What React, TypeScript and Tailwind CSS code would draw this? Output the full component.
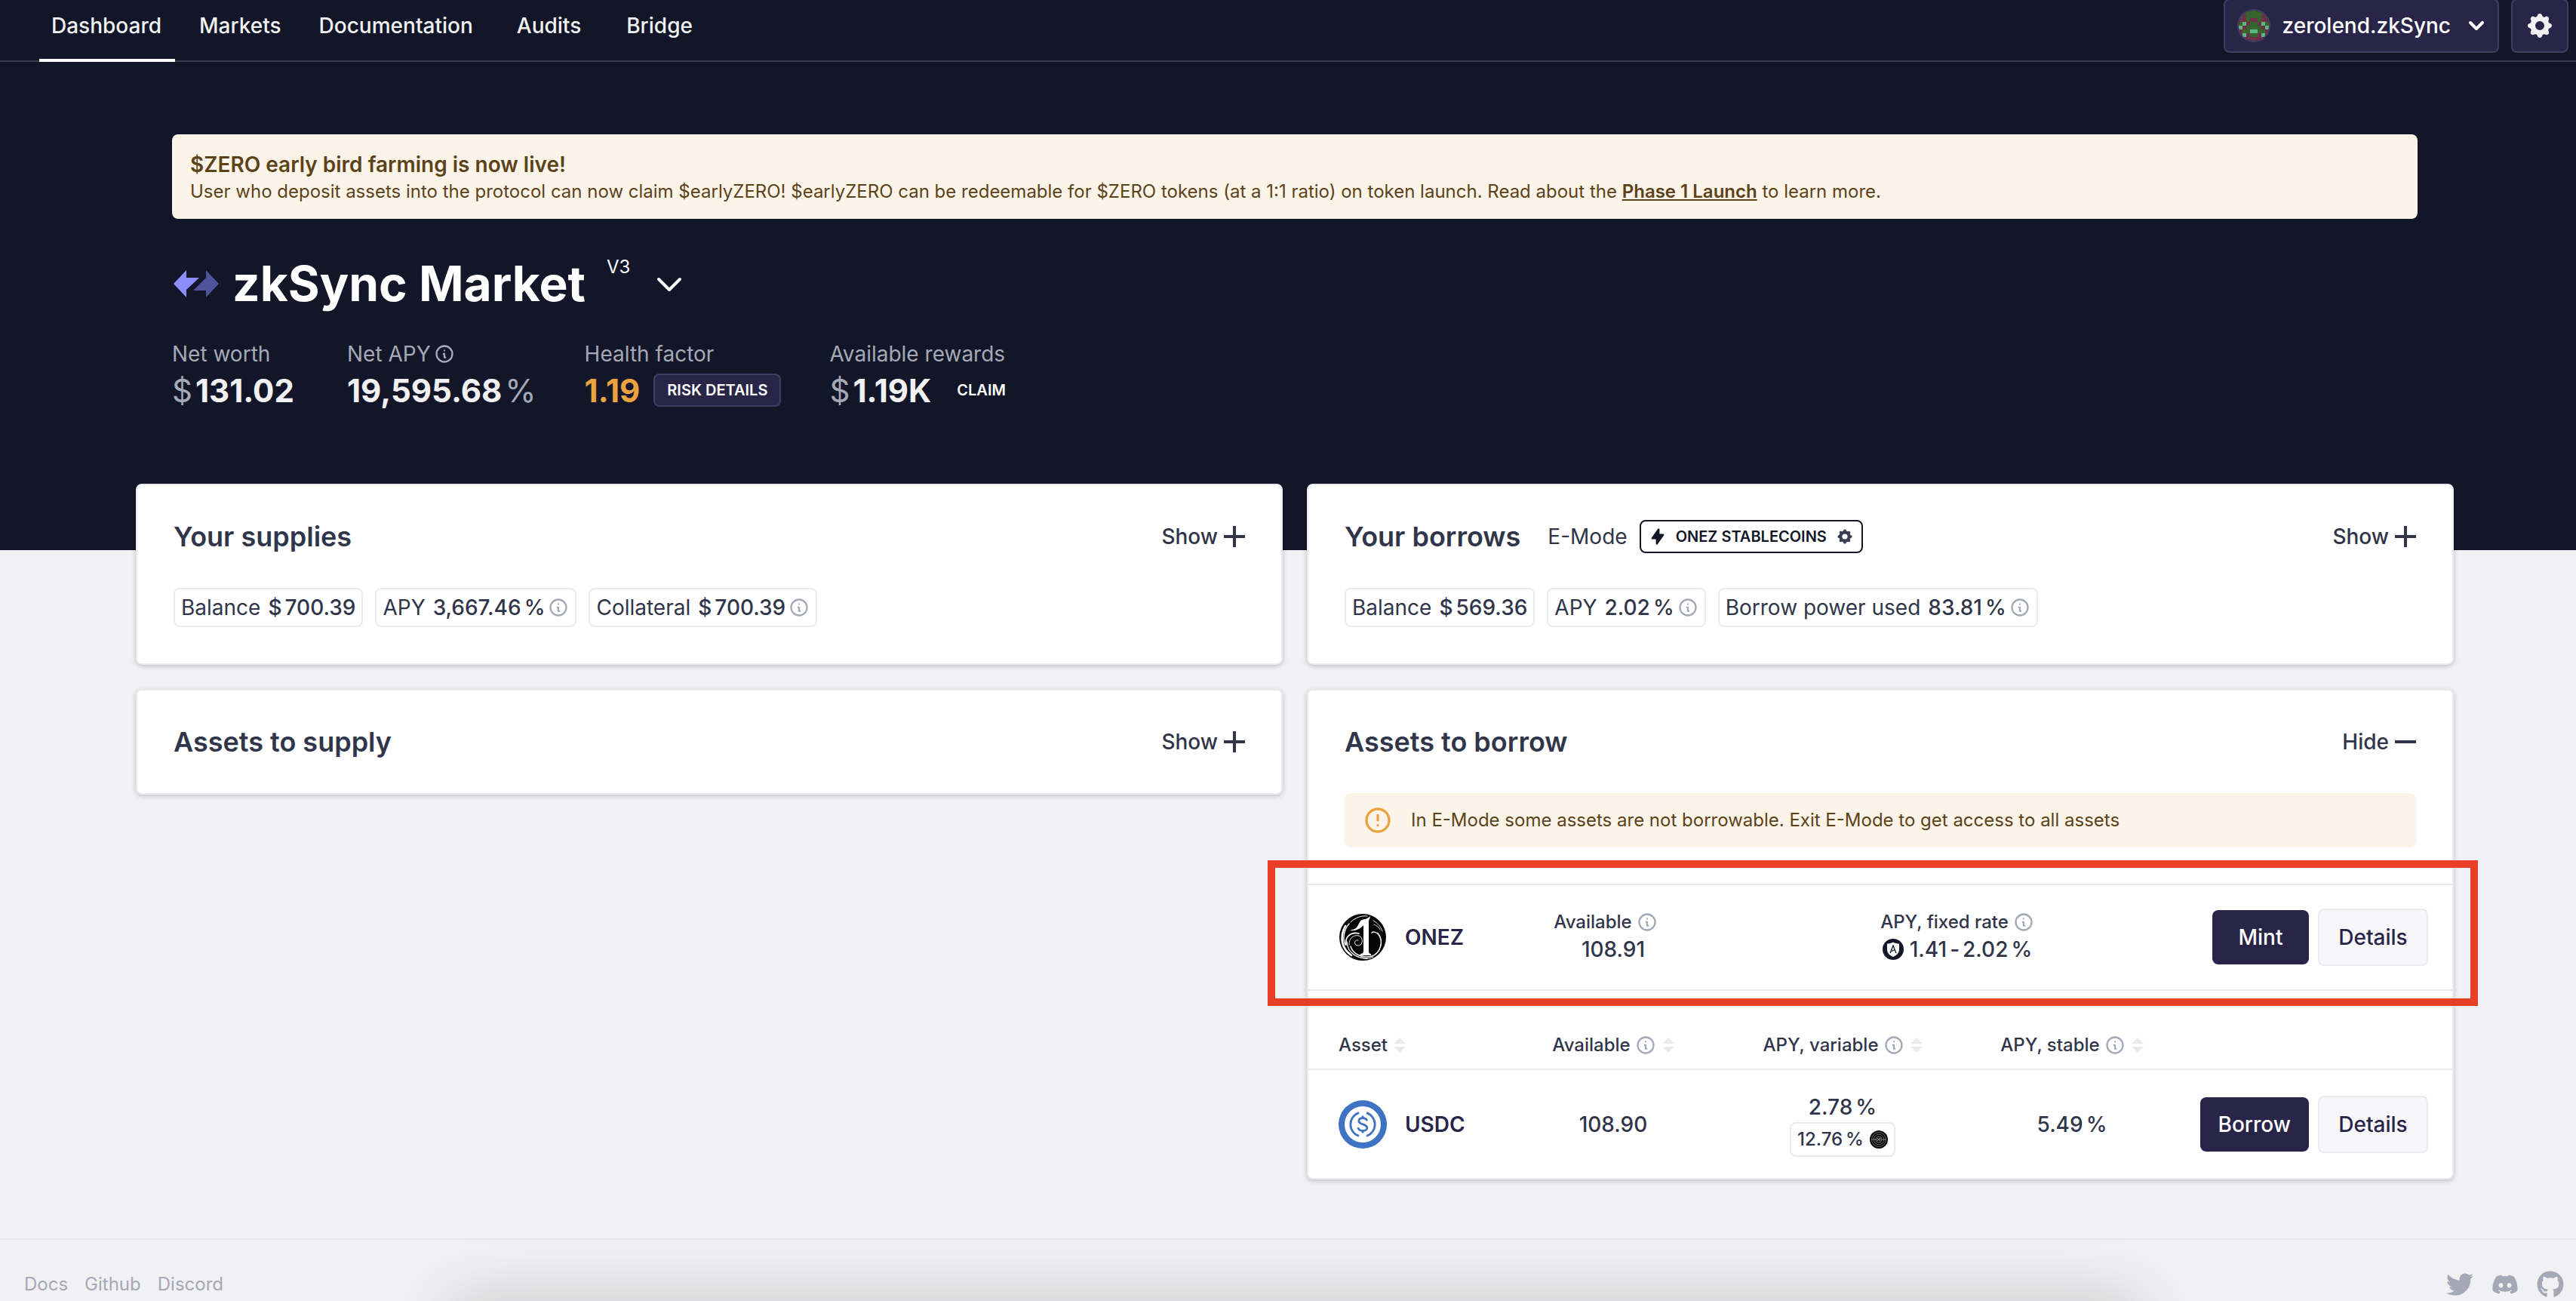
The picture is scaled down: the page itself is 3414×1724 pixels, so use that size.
import React from "react";
import {
  HiCog,
  HiChevronDown,
  HiLightningBolt,
  HiOutlineChevronDown,
  HiOutlineExclamationCircle,
  HiOutlineInformationCircle,
} from "react-icons/hi";
import { FaDiscord, FaGithub, FaTwitter } from "react-icons/fa";

/* ---------- icons ---------- */

const AVATAR_ROWS = [
  "gggggggg",
  "gmggggmg",
  "mmgmmgmm",
  "glmggmlg",
  "lmggggml",
  "mggllggm",
  "mlmggmlm",
  "mmmmmmmm",
];
const AVATAR_COLORS: Record<string, string> = { g: "#37642a", m: "#6d2f49", l: "#5cb77f" };

function Avatar() {
  return (
    <svg viewBox="0 0 8 8" className="size-11 rounded-full border-2 border-[#3f3d60]" shapeRendering="crispEdges" aria-hidden="true">
      {AVATAR_ROWS.map((row, y) =>
        row.split("").map((c, x) => (
          <rect key={`${x}-${y}`} x={x} y={y} width="1" height="1" fill={AVATAR_COLORS[c]} />
        )),
      )}
    </svg>
  );
}

function ZkSyncLogo() {
  return (
    <svg viewBox="0 0 60 36" className="h-9 w-[60px]" aria-hidden="true">
      <polygon points="60,18 43,36 43,27 26,27 43,10 43,0" fill="#4e529a" />
      <polygon points="0,18 17,0 17,10 34,10 17,26 17,36" fill="#8c8dfc" />
    </svg>
  );
}

function OnezLogo() {
  return (
    <svg viewBox="0 0 64 64" className="size-16 shrink-0" aria-hidden="true">
      <circle cx="32" cy="32" r="31" fill="#050505" />
      <g fill="none" stroke="#fff" strokeLinecap="round">
        <path d="M9 17C1 32 4 47 17 56" strokeWidth="2.6" />
        <path d="M14 14C7 22 5 34 9 42" strokeWidth="1.4" />
        <path d="M14 42C13 34 20 28 27 30C34 33 32 44 25 43C20 42 20 35 26 36" strokeWidth="0.9" />
        <path d="M10 42C8 32 16 24 27 27" strokeWidth="1.7" />
        <path d="M11 38C12 54 26 60 38 60" strokeWidth="1.3" />
        <path d="M16 44C19 55 32 60 44 57C56 53 59 38 54 30C51 25 46 24 44 26" strokeWidth="1.4" />
        <path d="M52 26C59 33 58 48 48 55" strokeWidth="0.8" />
        <path d="M20 55C28 60 38 62 46 58" strokeWidth="1" />
        <path d="M46 10C52 13 56 18 58 24" strokeWidth="0.8" />
        <path d="M47 15C51 17 54 19 55 22" strokeWidth="0.8" />
        <path d="M16 12C22 6 30 3 38 4" strokeWidth="1" />
      </g>
      <path
        d="M42 4C38 8 34 8 31 9C28 10 27 15 24 19C21 22 17 22 15 23C22 24 29 21 33 16V50C33 53 31 54 29 54V56H43V54C41 54 40 53 40 50V10C41 8 42 6 42 4Z"
        fill="#fff"
      />
    </svg>
  );
}

function UsdcLogo() {
  return (
    <svg viewBox="0 0 64 64" className="size-16 shrink-0" aria-hidden="true">
      <circle cx="32" cy="32" r="32" fill="#3e73c4" />
      <circle cx="32" cy="32" r="24" fill="#fff" />
      <g fill="none" stroke="#3e73c4" strokeWidth="2.8">
        <path d="M27 16.6A16.2 16.2 0 0 0 27 47.4" />
        <path d="M37 16.6A16.2 16.2 0 0 1 37 47.4" />
        <path d="M37.6 27.4C37.4 24.8 35.2 23.6 32 23.6C28.8 23.6 26.8 25.2 26.8 27.6C26.8 33.2 37.8 30.4 37.8 36.4C37.8 38.8 35.4 40.4 32 40.4C28.4 40.4 26.2 38.8 26 36" />
        <path d="M32 20.4V24M32 40V43.6" />
      </g>
    </svg>
  );
}

function ShieldIcon() {
  return (
    <svg viewBox="0 0 28 28" className="size-7" aria-hidden="true">
      <circle cx="14" cy="14" r="14" fill="#131628" />
      <path d="M14 4.5C16.5 6 19.5 6.5 22 6.5V14C22 19 18.5 22 14 24C9.5 22 6 19 6 14V6.5C8.5 6.5 11.5 6 14 4.5Z" fill="#fff" />
      <path d="M10 19L14 9L18 19M12 16.5L16 14.5" fill="none" stroke="#131628" strokeWidth="1.3" />
    </svg>
  );
}

function RewardTokenIcon() {
  return (
    <svg viewBox="0 0 24 24" className="ml-1 size-6" aria-hidden="true">
      <circle cx="12" cy="12" r="12" fill="#080808" />
      <g fill="none" stroke="#8b8b8b" strokeWidth="0.7">
        <circle cx="12" cy="12" r="9.5" />
        <circle cx="12" cy="12" r="6.8" />
        <circle cx="12" cy="12" r="4" />
      </g>
      <path d="M2 12H22M10 10L14 14M14 10L10 14" stroke="#9a9a9a" strokeWidth="0.8" />
    </svg>
  );
}

function PlusIcon() {
  return (
    <svg viewBox="0 0 28 28" className="size-7" aria-hidden="true">
      <path d="M0 14H28M14 0V28" stroke="currentColor" strokeWidth="4" />
    </svg>
  );
}

function MinusIcon() {
  return (
    <svg viewBox="0 0 28 28" className="size-7" aria-hidden="true">
      <path d="M0 14H28" stroke="currentColor" strokeWidth="4" />
    </svg>
  );
}

function SortIcon() {
  return (
    <svg viewBox="0 0 16 20" className="h-5 w-4" aria-hidden="true">
      <path d="M8 0L16 8H0ZM8 20L0 12H16Z" fill="#eaebef" />
    </svg>
  );
}

function Info() {
  return (
    <button type="button" aria-label="More information" className="flex">
      <HiOutlineInformationCircle className="size-7 text-[#a5a8b6]" />
    </button>
  );
}

/* ---------- shared pieces ---------- */

function Card({
  title,
  extra,
  open = false,
  children,
}: {
  title: string;
  extra?: React.ReactNode;
  open?: boolean;
  children?: React.ReactNode;
}) {
  return (
    <section className="rounded-lg border-2 border-[#eaebef] bg-white shadow-[0_2px_6px_rgba(0,0,0,0.2)]">
      <div className="flex h-[136px] items-center justify-between px-12">
        <div className="flex items-center">
          <h2 className="text-[36px] leading-[44px] font-semibold">{title}</h2>
          {extra}
        </div>
        <button type="button" className="flex items-center gap-2 text-[28px] leading-9 font-medium">
          {open ? "Hide" : "Show"}
          {open ? <MinusIcon /> : <PlusIcon />}
        </button>
      </div>
      {children}
    </section>
  );
}

function Chip({
  label,
  value,
  prefix,
  suffix,
  info,
}: {
  label: string;
  value: string;
  prefix?: string;
  suffix?: string;
  info?: boolean;
}) {
  return (
    <div className="flex h-[52px] items-center gap-2.5 rounded-lg border-2 border-[#eaebef] px-2 text-[28px]">
      <span>{label}</span>
      <span className="flex items-center gap-1 font-medium">
        {prefix && <span>{prefix}</span>}
        {value}
        {suffix && <span>{suffix}</span>}
        {info && <Info />}
      </span>
    </div>
  );
}

function Stat({ label, info, children }: { label: string; info?: boolean; children: React.ReactNode }) {
  return (
    <div className="flex min-w-[168px] flex-col gap-1.5">
      <div className="flex h-10 items-center gap-1 text-[28px] text-[#a5a8b6]">
        {label}
        {info && <Info />}
      </div>
      <div className="flex h-11 items-center text-[42px] font-bold text-[#f1f1f3]">{children}</div>
    </div>
  );
}

function ActionButtons({ primary }: { primary: string }) {
  return (
    <div className="flex items-center justify-end gap-3 text-[28px] font-medium">
      <button type="button" className="h-[72px] min-w-32 rounded-lg bg-[#292548] px-6 text-white">
        {primary}
      </button>
      <button
        type="button"
        className="h-[76px] min-w-[146px] rounded-lg border-2 border-[#eaebef] bg-[#f7f7f9] px-6 text-[#292548]"
      >
        Details
      </button>
    </div>
  );
}

function AssetName({ logo, symbol }: { logo: React.ReactNode; symbol: string }) {
  return (
    <a href="#" className="flex items-center gap-6 text-[28px] font-semibold text-[#292548]">
      {logo}
      {symbol}
    </a>
  );
}

function SortHeader({ label, info = true }: { label: string; info?: boolean }) {
  return (
    <div className="inline-flex items-center gap-2">
      <span className="flex items-center gap-1.5 font-medium">
        {label}
        {info && <Info />}
      </span>
      <button type="button" aria-label={`Sort by ${label}`}>
        <SortIcon />
      </button>
    </div>
  );
}

/* ---------- page sections ---------- */

function Header() {
  return (
    <header className="-mt-[14px] flex h-24 items-center justify-between pr-2.5 pl-13 shadow-[inset_0_-2px_0_#3a3b50]">
      <nav className="flex h-full items-center gap-4 text-[28px] font-medium text-[#f1f1f3]">
        <a href="#" className="flex h-full items-center border-y-4 border-t-transparent border-b-white pr-4.5 pl-4">
          Dashboard
        </a>
        <a href="#" className="px-4">
          Markets
        </a>
        <a href="#" className="px-4.5">
          Documentation
        </a>
        <a href="#" className="px-6">
          Audits
        </a>
        <a href="#" className="px-5">
          Bridge
        </a>
      </nav>
      <div className="flex gap-4">
        <button
          type="button"
          className="flex h-[72px] items-center rounded-lg border-2 border-[#3f3d60] bg-[#292548] pr-2 pl-4 text-[28px] font-medium text-white"
        >
          <Avatar />
          <span className="pr-3.5 pl-4">zerolend.zkSync</span>
          <HiChevronDown className="size-10" />
        </button>
        <button
          type="button"
          aria-label="Settings"
          className="flex h-[72px] w-[76px] items-center justify-center rounded-lg border-2 border-[#3f3d60] bg-[#292548] text-[#f1f1f3]"
        >
          <HiCog className="size-10" />
        </button>
      </div>
    </header>
  );
}

function Hero() {
  return (
    <div className="bg-[#131628] pb-[190px]">
      <Header />
      <div className="pl-[18px]">
        <div className="mx-auto max-w-[3072px] px-12">
          <div className="mt-24 rounded-lg bg-[#fcf4e9] px-6 py-5 text-[#5c4219]">
            <p className="text-[28px] leading-10 font-semibold">$ZERO early bird farming is now live!</p>
            <p className="text-[24px] leading-8">
              User who deposit assets into the protocol can now claim $earlyZERO! $earlyZERO can be redeemable for $ZERO
              tokens (at a 1:1 ratio) on token launch. Read about the{" "}
              <a href="#" className="font-semibold underline">
                Phase 1 Launch
              </a>{" "}
              to learn more.
            </p>
          </div>

          <button type="button" className="mt-[46px] flex h-20 items-center pl-0.5 text-white">
            <ZkSyncLogo />
            <h1 className="pl-4.5 text-[64px] leading-20 font-bold">zkSync Market</h1>
            <span className="pr-7 pb-11 pl-7 text-[24px]">V3</span>
            <HiOutlineChevronDown className="size-12" />
          </button>

          <div className="mt-[33px] flex gap-16">
            <Stat label="Net worth">
              <span className="pr-1 font-normal text-[#a5a8b6]">$</span>131.02
            </Stat>
            <Stat label="Net APY" info>
              19,595.68<span className="pl-1 font-normal text-[#a5a8b6]">%</span>
            </Stat>
            <Stat label="Health factor">
              <span className="text-[#eaa340]">1.19</span>
              <button
                type="button"
                className="ml-4.5 h-11 rounded-lg border-2 border-[#3f3d60] bg-[#292548] px-4 text-[20px] font-semibold text-white"
              >
                RISK DETAILS
              </button>
            </Stat>
            <Stat label="Available rewards">
              <span className="pr-1 font-normal text-[#a5a8b6]">$</span>1.19K
              <button type="button" className="ml-4.5 h-11 px-4 text-[20px] font-semibold text-white">
                CLAIM
              </button>
            </Stat>
          </div>
        </div>
      </div>
    </div>
  );
}

function BorrowAssets() {
  return (
    <>
      <div className="mx-12 flex h-[72px] items-center gap-6 rounded-lg bg-[#fcf4e9] px-6 text-[24px] text-[#5c4219]">
        <HiOutlineExclamationCircle className="size-10 text-[#eaa340]" />
        <p>In E-Mode some assets are not borrowable. Exit E-Mode to get access to all assets</p>
      </div>

      <div className="relative mt-12">
        <div className="flex h-[142px] items-center border-y-2 border-[#eaebef]">
          <div className="w-[252px] pl-10">
            <AssetName logo={<OnezLogo />} symbol="ONEZ" />
          </div>
          <div className="flex flex-1 flex-col items-center">
            <div className="flex h-8 items-center gap-1.5 pr-5 text-[24px] font-medium">
              Available
              <Info />
            </div>
            <div className="text-[28px] leading-10 font-medium">108.91</div>
          </div>
          <div className="flex flex-2 flex-col items-center">
            <div className="flex h-8 items-center gap-1.5 text-[24px] font-medium">
              APY, fixed rate
              <Info />
            </div>
            <div className="flex items-center gap-1 text-[28px] leading-10 font-medium">
              <ShieldIcon />
              <span className="pl-1">1.41</span>
              <span>-</span>
              <span>2.02</span>
              <span>%</span>
            </div>
          </div>
          <div className="w-[352px] pr-8">
            <ActionButtons primary="Mint" />
          </div>
        </div>
        {/* annotation frame around the ONEZ row */}
        <div className="pointer-events-none absolute -top-[31px] -right-[34px] -bottom-5 -left-[54px] border-10 border-[#e93f26]" />
      </div>

      <table className="mt-10 w-full table-fixed">
        <colgroup>
          <col className="w-[252px]" />
          <col />
          <col />
          <col />
          <col className="w-[352px]" />
        </colgroup>
        <thead>
          <tr className="h-16 border-b-2 border-[#eaebef] text-[24px]">
            <th scope="col" className="pl-10 text-left">
              <SortHeader label="Asset" info={false} />
            </th>
            <th scope="col">
              <SortHeader label="Available" />
            </th>
            <th scope="col">
              <SortHeader label="APY, variable" />
            </th>
            <th scope="col">
              <SortHeader label="APY, stable" />
            </th>
            <td />
          </tr>
        </thead>
        <tbody>
          <tr className="h-36 text-center text-[28px] font-medium">
            <td className="pl-10">
              <AssetName logo={<UsdcLogo />} symbol="USDC" />
            </td>
            <td>108.90</td>
            <td>
              <div className="flex flex-col items-center">
                <div className="flex gap-1 leading-10">
                  <span>2.78</span>
                  <span>%</span>
                </div>
                <div className="flex h-[46px] items-center gap-1 rounded-lg border-2 border-[#eaebef] px-2 text-[24px]">
                  <span>12.76</span>
                  <span>%</span>
                  <RewardTokenIcon />
                </div>
              </div>
            </td>
            <td>
              <div className="flex justify-center gap-1">
                <span>5.49</span>
                <span>%</span>
              </div>
            </td>
            <td className="pr-8">
              <ActionButtons primary="Borrow" />
            </td>
          </tr>
        </tbody>
      </table>
    </>
  );
}

function Footer() {
  return (
    <footer className="mt-[78px] flex h-[83px] items-center justify-between border-t-2 border-[#e7e8eb] pt-9 pr-4 pl-8 text-[#a5a8b6]">
      <nav className="flex gap-[22px] text-[24px]">
        <a href="#">Docs</a>
        <a href="#">Github</a>
        <a href="#">Discord</a>
      </nav>
      <div className="flex gap-6">
        <a href="#" aria-label="Twitter">
          <FaTwitter className="size-9" />
        </a>
        <a href="#" aria-label="Discord">
          <FaDiscord className="size-9" />
        </a>
        <a href="#" aria-label="GitHub">
          <FaGithub className="size-9" />
        </a>
      </div>
    </footer>
  );
}

export default function App() {
  return (
    <div className="relative min-h-screen overflow-hidden bg-[#f1f1f3] font-['Inter',sans-serif] text-[#303549]">
      <Hero />
      <main className="-mt-[88px] pl-[18px]">
        <div className="mx-auto grid max-w-[3072px] grid-cols-2 items-start gap-8">
          <div className="flex flex-col gap-8">
            <Card title="Your supplies">
              <div className="flex gap-4 px-12 pb-12">
                <Chip label="Balance" prefix="$" value="700.39" />
                <Chip label="APY" value="3,667.46" suffix="%" info />
                <Chip label="Collateral" prefix="$" value="700.39" info />
              </div>
            </Card>
            <Card title="Assets to supply" />
          </div>
          <div className="flex flex-col gap-8">
            <Card
              title="Your borrows"
              extra={
                <>
                  <span className="pr-4 pl-9 text-[28px]">E-Mode</span>
                  <button
                    type="button"
                    className="flex h-11 items-center gap-3 rounded-lg border-2 border-[#131628] px-2.5 text-[20px] font-semibold text-[#131628]"
                  >
                    <HiLightningBolt className="size-6" />
                    ONEZ STABLECOINS
                    <HiCog className="size-6 text-[#383d51]" />
                  </button>
                </>
              }
            >
              <div className="flex gap-4 px-12 pb-12">
                <Chip label="Balance" prefix="$" value="569.36" />
                <Chip label="APY" value="2.02" suffix="%" info />
                <Chip label="Borrow power used" value="83.81" suffix="%" info />
              </div>
            </Card>
            <Card title="Assets to borrow" open>
              <BorrowAssets />
            </Card>
          </div>
        </div>
      </main>
      <Footer />
      {/* soft shadow rising from below the fold */}
      <div className="pointer-events-none absolute right-[580px] -bottom-12 left-[600px] h-8 shadow-[0_0_90px_rgba(0,0,0,0.4)]" />
    </div>
  );
}
